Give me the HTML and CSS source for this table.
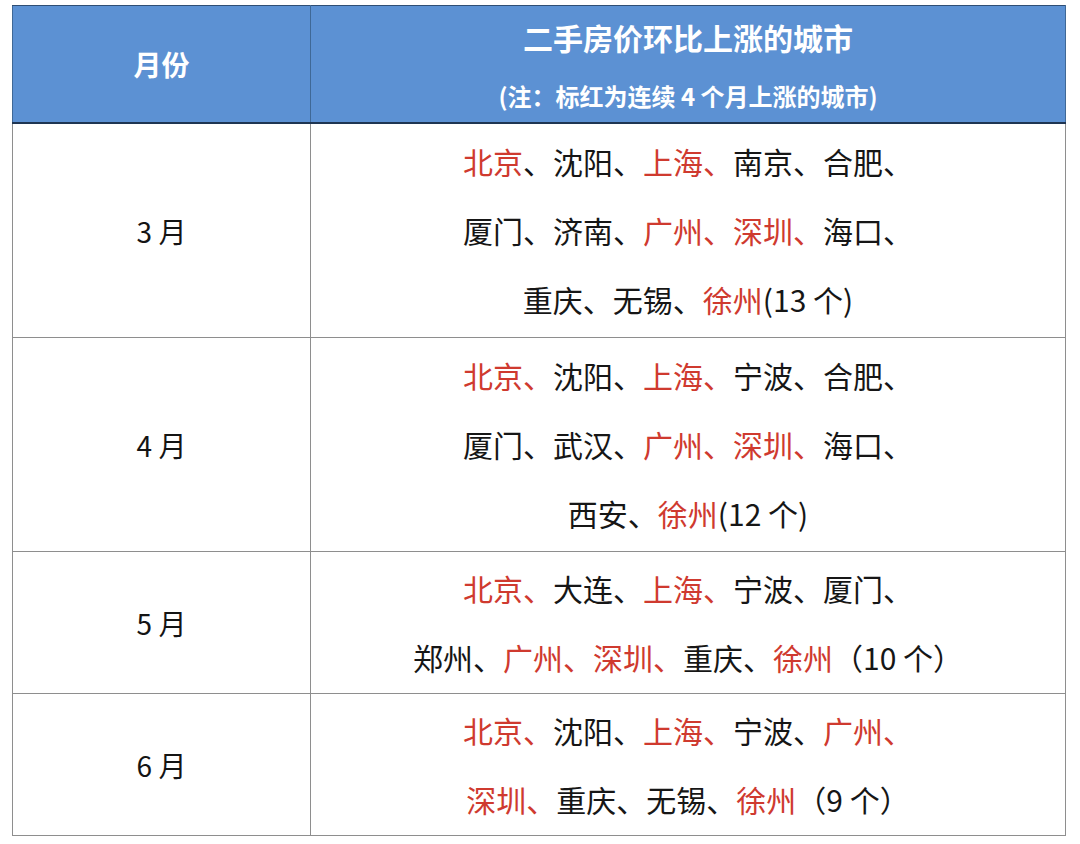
FILE: index.html
```html
<!DOCTYPE html>
<html lang="zh-CN">
<head>
<meta charset="utf-8">
<title>二手房价环比上涨的城市</title>
<link rel="stylesheet" href="styles.css">
</head>
<body>
<table class="tbl">
  <colgroup><col class="c-month"><col class="c-city"></colgroup>
  <thead>
    <tr>
      <th class="h-month">月份</th>
      <th class="h-city">
        <span class="h-title">二手房价环比上涨的城市</span>
        <span class="h-sub">(注：标红为连续 4 个月上涨的城市)</span>
      </th>
    </tr>
  </thead>
  <tbody>
    <tr class="r-tall">
      <td class="month">3 月</td>
      <td class="cities"><span class="red">北京</span>、沈阳、<span class="red">上海、</span>南京、合肥、<br>厦门、济南、<span class="red">广州、深圳、</span>海口、<br>重庆、无锡、<span class="red">徐州</span>(13 个)</td>
    </tr>
    <tr class="r-tall">
      <td class="month">4 月</td>
      <td class="cities"><span class="red">北京、</span>沈阳、<span class="red">上海、</span>宁波、合肥、<br>厦门、武汉、<span class="red">广州、深圳、</span>海口、<br>西安、<span class="red">徐州</span>(12 个)</td>
    </tr>
    <tr class="r-short">
      <td class="month">5 月</td>
      <td class="cities"><span class="red">北京、</span>大连、<span class="red">上海、</span>宁波、厦门、<br>郑州、<span class="red">广州、深圳、</span>重庆、<span class="red">徐州</span>（10 个）</td>
    </tr>
    <tr class="r-short">
      <td class="month">6 月</td>
      <td class="cities"><span class="red">北京、</span>沈阳、<span class="red">上海、</span>宁波、<span class="red">广州、</span><br><span class="red">深圳、</span>重庆、无锡、<span class="red">徐州</span>（9 个）</td>
    </tr>
  </tbody>
</table>
</body>
</html>
```
FILE: styles.css
```css
html, body {
  margin: 0;
  padding: 0;
  background: #ffffff;
}
body {
  padding: 5px 0 0 12px;
  font-family: "Noto Sans CJK SC", "Noto Sans", sans-serif;
  color: #1a1a1a;
}
.tbl {
  border-collapse: collapse;
  table-layout: fixed;
  width: 1053px;
}
.c-month { width: 298px; }
.c-city { width: 755px; }

.tbl th {
  background: #5c91d3;
  color: #ffffff;
  font-weight: 700;
  border: 1px solid #3f6896;
  border-top: 1px solid #2f4e74;
  border-bottom: 2px solid #1f3552;
  padding: 0;
  text-align: center;
  vertical-align: middle;
}
.h-month {
  font-size: 28px;
  height: 116px;
  line-height: 1;
  padding-top: 4px;
}
.h-city {
  padding: 18px 0 3px;
}
.h-title {
  display: block;
  font-size: 30px;
  line-height: 44px;
}
.h-sub {
  display: block;
  font-size: 24px;
  line-height: 34px;
  margin-top: 20px;
}

.tbl td {
  border: 1px solid #8e8e8e;
  padding: 0;
  text-align: center;
  vertical-align: middle;
}
.r-tall td { height: 213px; }
.r-short td { height: 141px; }
.month {
  font-size: 28px;
  color: #141414;
}
.cities {
  font-size: 30px;
  line-height: 69px;
  white-space: nowrap;
  color: #161616;
}
.red {
  color: #cf3a2f;
}
```
